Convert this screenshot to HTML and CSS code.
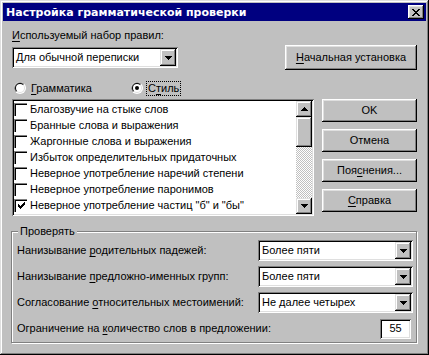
FILE: index.html
```html
<!DOCTYPE html>
<html lang="ru">

<head>
    <meta charset="UTF-8">
    <meta name="viewport" content="width=device-width, initial-scale=1.0">
    <title>Настройка грамматической проверки</title>

    <link rel="stylesheet" href="styles.css">
</head>

<body>
    <div class="window">
        <div class="titlebar">
            <span class="title">Настройка грамматической проверки</span>
            <span class="close-btn">
                <svg width="8" height="7" viewBox="0 0 8 7" shape-rendering="crispEdges"><path d="M0 0h2v1H0zM6 0h2v1H6zM1 1h2v1H1zM5 1h2v1H5zM2 2h4v1H2zM3 3h2v1H3zM2 4h4v1H2zM1 5h2v1H1zM5 5h2v1H5zM0 6h2v1H0zM6 6h2v1H6z"/></svg>
            </span>
        </div>

        <div class="content">
            <div class="top-row">
                <div class="ruleset">
                    <div class="label"><u>И</u>спользуемый набор правил:</div>
                    <div class="combo combo-rules">
                        <span class="combo-text">Для обычной переписки</span>
                        <span class="combo-btn"><svg width="7" height="4" viewBox="0 0 7 4" shape-rendering="crispEdges"><path d="M0 0h7v1H0zM1 1h5v1H1zM2 2h3v1H2zM3 3h1v1H3z"/></svg></span>
                    </div>
                </div>
                <button type="button" class="btn btn-reset"><u>Н</u>ачальная установка</button>
            </div>

            <div class="radios">
                <div class="radio radio-grammar">
                    <svg width="12" height="12" viewBox="0 0 12 12"><circle cx="6" cy="6" r="6" fill="#fff"/><path d="M1.76 10.24A6 6 0 0 1 10.24 1.76Z" fill="#808080"/><circle cx="6" cy="6" r="5" fill="#dfdfdf"/><path d="M2.46 9.54A5 5 0 0 1 9.54 2.46Z" fill="#000"/><circle cx="6" cy="6" r="4" fill="#fff"/></svg>
                    <span><u>Г</u>рамматика</span>
                </div>
                <div class="radio">
                    <svg width="12" height="12" viewBox="0 0 12 12"><circle cx="6" cy="6" r="6" fill="#fff"/><path d="M1.76 10.24A6 6 0 0 1 10.24 1.76Z" fill="#808080"/><circle cx="6" cy="6" r="5" fill="#dfdfdf"/><path d="M2.46 9.54A5 5 0 0 1 9.54 2.46Z" fill="#000"/><circle cx="6" cy="6" r="4" fill="#fff"/><circle cx="6" cy="6" r="2" fill="#000"/></svg>
                    <span class="focus">С<u>т</u>иль</span>
                </div>
            </div>

            <div class="middle">
                <div class="listbox">
                    <div class="items">
                        <div class="item"><span class="check"></span>Благозвучие на стыке слов</div>
                        <div class="item"><span class="check"></span>Бранные слова и выражения</div>
                        <div class="item"><span class="check"></span>Жаргонные слова и выражения</div>
                        <div class="item"><span class="check"></span>Избыток определительных придаточных</div>
                        <div class="item"><span class="check"></span>Неверное употребление наречий степени</div>
                        <div class="item"><span class="check"></span>Неверное употребление паронимов</div>
                        <div class="item"><span class="check"><svg width="7" height="7" viewBox="0 0 7 7" shape-rendering="crispEdges"><path d="M0 2h1v3H0zM1 3h1v3H1zM2 4h1v3H2zM3 3h1v3H3zM4 2h1v3H4zM5 1h1v3H5zM6 0h1v3H6z"/></svg></span>Неверное употребление частиц "б" и "бы"</div>
                    </div>
                    <div class="scrollbar">
                        <div class="sb-btn"><svg width="7" height="4" viewBox="0 0 7 4" shape-rendering="crispEdges"><path d="M3 0h1v1H3zM2 1h3v1H2zM1 2h5v1H1zM0 3h7v1H0z"/></svg></div>
                        <div class="sb-thumb"></div>
                        <div class="sb-track"></div>
                        <div class="sb-btn"><svg width="7" height="4" viewBox="0 0 7 4" shape-rendering="crispEdges"><path d="M0 0h7v1H0zM1 1h5v1H1zM2 2h3v1H2zM3 3h1v1H3z"/></svg></div>
                    </div>
                </div>

                <div class="actions">
                    <button type="button" class="btn">OK</button>
                    <button type="button" class="btn">Отмена</button>
                    <button type="button" class="btn">Поя<u>с</u>нения...</button>
                    <button type="button" class="btn"><u>С</u>правка</button>
                </div>
            </div>

            <div class="group">
                <div class="legend">Проверять</div>
                <div class="group-rows">
                    <div class="group-row">
                        <span>Нанизывание <u>р</u>одительных падежей:</span>
                        <div class="combo combo-small">
                            <span class="combo-text">Более пяти</span>
                            <span class="combo-btn"><svg width="7" height="4" viewBox="0 0 7 4" shape-rendering="crispEdges"><path d="M0 0h7v1H0zM1 1h5v1H1zM2 2h3v1H2zM3 3h1v1H3z"/></svg></span>
                        </div>
                    </div>
                    <div class="group-row">
                        <span>Нанизывание <u>п</u>редложно-именных групп:</span>
                        <div class="combo combo-small">
                            <span class="combo-text">Более пяти</span>
                            <span class="combo-btn"><svg width="7" height="4" viewBox="0 0 7 4" shape-rendering="crispEdges"><path d="M0 0h7v1H0zM1 1h5v1H1zM2 2h3v1H2zM3 3h1v1H3z"/></svg></span>
                        </div>
                    </div>
                    <div class="group-row">
                        <span>Согласование <u>о</u>тносительных местоимений:</span>
                        <div class="combo combo-small">
                            <span class="combo-text">Не далее четырех</span>
                            <span class="combo-btn"><svg width="7" height="4" viewBox="0 0 7 4" shape-rendering="crispEdges"><path d="M0 0h7v1H0zM1 1h5v1H1zM2 2h3v1H2zM3 3h1v1H3z"/></svg></span>
                        </div>
                    </div>
                    <div class="group-row">
                        <span>Ограничение на <u>к</u>оличество слов в предложении:</span>
                        <div class="field-num">55</div>
                    </div>
                </div>
            </div>
        </div>
    </div>
</body>

</html>
```

FILE: styles.css
```css
body {
    margin: 0;
    font-family: "Liberation Sans", Arial, sans-serif;
    font-size: 11px;
    line-height: 13px;
    color: #000;
    background-color: #c0c0c0;
}

u {
    text-decoration-thickness: 1px;
    text-underline-offset: 2px;
}

.window {
    width: 429px;
    height: 355px;
    box-sizing: border-box;
    padding: 3px;
    background-color: #c0c0c0;
    box-shadow: inset -1px -1px #000, inset 1px 1px #dfdfdf, inset -2px -2px #808080, inset 2px 2px #fff;
    overflow: hidden;
}

.titlebar {
    height: 18px;
    display: flex;
    align-items: center;
    background-color: #000080;
    padding: 0 2px 0 3px;
}

.title {
    font-family: "DejaVu Sans", sans-serif;
    font-weight: bold;
    font-size: 11px;
    color: #fff;
}

.close-btn {
    margin-left: auto;
    width: 16px;
    height: 14px;
    display: flex;
    justify-content: center;
    align-items: center;
    background-color: #c0c0c0;
    box-shadow: inset -1px -1px #000, inset 1px 1px #fff, inset -2px -2px #808080, inset 2px 2px #dfdfdf;
}

.content {
    padding: 0 9px;
}

/* raised button */
.btn {
    font: inherit;
    color: #000;
    border: none;
    padding: 0;
    margin: 0;
    height: 23px;
    background-color: #c0c0c0;
    box-shadow: inset -1px -1px #000, inset 1px 1px #fff, inset -2px -2px #808080, inset 2px 2px #dfdfdf;
    text-align: center;
}

.top-row {
    display: flex;
    justify-content: space-between;
    padding-top: 8px;
}

.label {
    margin-bottom: 5px;
}

.combo {
    display: flex;
    align-items: center;
    box-sizing: border-box;
    height: 21px;
    padding: 2px;
    background-color: #fff;
    box-shadow: inset 1px 1px #808080, inset -1px -1px #fff, inset 2px 2px #000, inset -2px -2px #dfdfdf;
}

.combo-text {
    flex: 1;
    padding-left: 2px;
}

.combo-btn {
    width: 16px;
    height: 17px;
    display: flex;
    justify-content: center;
    align-items: center;
    background-color: #c0c0c0;
    box-shadow: inset -1px -1px #000, inset 1px 1px #dfdfdf, inset -2px -2px #808080, inset 2px 2px #fff;
}

.combo-rules {
    width: 166px;
}

.btn-reset {
    width: 132px;
    height: 25px;
    margin-top: 16px;
}

.radios {
    display: flex;
    align-items: center;
    height: 16px;
    margin-top: 10px;
}

.radio {
    display: flex;
    align-items: center;
    gap: 5px;
}

.radio-grammar {
    width: 117px;
    padding-left: 2px;
}

.focus {
    outline: 1px dotted #000;
    padding: 0 1px;
    margin-left: -1px;
}

.middle {
    display: flex;
    justify-content: space-between;
    margin-top: 3px;
}

.listbox {
    width: 302px;
    height: 117px;
    box-sizing: border-box;
    padding: 2px;
    display: flex;
    background-color: #fff;
    box-shadow: inset 1px 1px #808080, inset -1px -1px #fff, inset 2px 2px #000, inset -2px -2px #dfdfdf;
}

.items {
    flex: 1;
}

.item {
    height: 16px;
    display: flex;
    align-items: center;
    white-space: nowrap;
}

.check {
    width: 13px;
    height: 13px;
    box-sizing: border-box;
    margin-right: 3px;
    display: flex;
    justify-content: center;
    align-items: center;
    background-color: #fff;
    box-shadow: inset 1px 1px #808080, inset 2px 2px #000;
}

.check svg {
    margin: 1px 0 0 1px;
}

.scrollbar {
    width: 16px;
    display: flex;
    flex-direction: column;
}

.sb-btn,
.sb-thumb {
    background-color: #c0c0c0;
    box-shadow: inset -1px -1px #000, inset 1px 1px #dfdfdf, inset -2px -2px #808080, inset 2px 2px #fff;
}

.sb-btn {
    height: 16px;
    display: flex;
    justify-content: center;
    align-items: center;
}

.sb-thumb {
    height: 30px;
}

.sb-track {
    flex: 1;
    background: repeating-conic-gradient(#c0c0c0 0 25%, #fff 0 50%) 0 0 / 2px 2px;
}

.actions {
    width: 95px;
    display: flex;
    flex-direction: column;
    gap: 7px;
}

.group {
    width: 406px;
    height: 112px;
    box-sizing: border-box;
    margin: 15px 0 0 -1px;
    border: 1px solid #808080;
    box-shadow: inset 1px 1px #fff, 1px 1px #fff;
}

.legend {
    width: fit-content;
    margin: -7px 0 0 6px;
    padding: 0 2px;
    background-color: #c0c0c0;
}

.group-rows {
    margin-top: 2px;
    padding: 0 3px 0 5px;
    display: flex;
    flex-direction: column;
    gap: 5px;
}

.group-row {
    display: flex;
    justify-content: space-between;
    align-items: center;
    height: 21px;
}

.combo-small {
    width: 155px;
}

.field-num {
    width: 31px;
    height: 20px;
    margin-right: 2px;
    box-sizing: border-box;
    display: flex;
    justify-content: center;
    align-items: center;
    background-color: #fff;
    box-shadow: inset 1px 1px #808080, inset -1px -1px #fff, inset 2px 2px #000, inset -2px -2px #dfdfdf;
}
```
